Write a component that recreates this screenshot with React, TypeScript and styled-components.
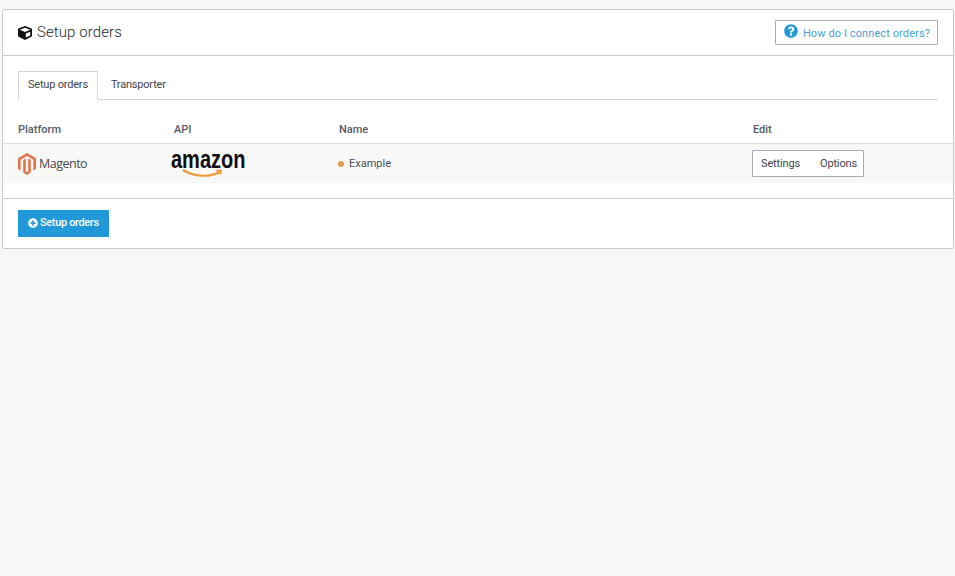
import * as React from "react";
import styled, { createGlobalStyle } from "styled-components";
import { FaCube, FaPlusCircle, FaQuestionCircle } from "react-icons/fa";

const GlobalStyle = createGlobalStyle`
  html, body {
    margin: 0;
    padding: 0;
    height: 100%;
    background: #f8f8f8;
    font-family: Roboto, "Liberation Sans", sans-serif;
    color: #3f444f;
  }
`;

const App: React.FC = () => {
  return (
    <Page>
      <GlobalStyle />
      <Card>
        <CardHeader>
          <CardTitle>
            <FaCube size={14} color="#111" />
            <span>Setup orders</span>
          </CardTitle>
          <HelpButton>
            <FaQuestionCircle size={14} color="#2199d8" />
            <span>How do I connect orders?</span>
          </HelpButton>
        </CardHeader>
        <CardBody>
          <Tabs>
            <Tab $active>Setup orders</Tab>
            <Tab>Transporter</Tab>
          </Tabs>
          <HeaderRow>
            <HeaderCell>Platform</HeaderCell>
            <HeaderCell>API</HeaderCell>
            <HeaderCell>Name</HeaderCell>
            <HeaderCell>Edit</HeaderCell>
          </HeaderRow>
          <DataRow>
            <MagentoLogo>
              <svg width="18" height="22" viewBox="0 0 18 22">
                <path
                  fill="#e2734a"
                  d="M9 0 L18 5.2 V16 L15.4 17.5 V6.7 L9 3 L2.6 6.7 V17.5 L0 16 V5.2 Z"
                />
                <path
                  fill="#e2734a"
                  d="M7.8 5.6 L7.8 18.4 L9 19.1 L10.2 18.4 V5.6 L12.8 7.1 V19.6 L9 22 L5.2 19.6 V7.1 Z"
                />
              </svg>
              <MagentoText>Magento</MagentoText>
            </MagentoLogo>
            <AmazonLogo>
              <AmazonText>amazon</AmazonText>
              <svg width="42" height="9" viewBox="0 0 42 9">
                <path
                  d="M1 1 C10 7 26 9 37 3.5"
                  fill="none"
                  stroke="#ee9b3a"
                  strokeWidth="2.2"
                />
                <path d="M33 1 L40 0.5 L39 6 Z" fill="#ee9b3a" />
              </svg>
            </AmazonLogo>
            <NameCell>
              <StatusDot />
              Example
            </NameCell>
            <EditGroup>
              <EditButton>Settings</EditButton>
              <EditButton>Options</EditButton>
            </EditGroup>
          </DataRow>
        </CardBody>
        <CardFooter>
          <PrimaryButton>
            <FaPlusCircle size={10} color="#fff" />
            <span>Setup orders</span>
          </PrimaryButton>
        </CardFooter>
      </Card>
    </Page>
  );
};

export default App;

const Page = styled.div`
  padding: 9px 1px 0 2px;
  min-height: 567px;
`;

const Card = styled.div`
  background: #fff;
  border: 1px solid #c9c9c9;
  border-radius: 2px;
`;

const CardHeader = styled.div`
  display: flex;
  justify-content: space-between;
  align-items: center;
  height: 45px;
  padding: 0 15px;
  border-bottom: 1px solid #c9c9c9;
`;

const CardTitle = styled.div`
  display: flex;
  align-items: center;
  gap: 5px;
  font-size: 15px;
  font-weight: 300;
  letter-spacing: 0.1px;
  color: #23262d;

  span {
    margin-top: -1px;
  }
`;

const HelpButton = styled.div`
  display: flex;
  align-items: center;
  gap: 5px;
  box-sizing: border-box;
  height: 25px;
  padding: 0 7px 0 8px;
  border: 1px solid #a9aabb;
  border-radius: 1px;
  font-size: 11px;
  letter-spacing: 0.1px;
  color: #4a9fd8;

  span {
    margin-top: 2px;
  }

  svg {
    margin-top: -3px;
  }
`;

const CardBody = styled.div`
  padding: 15px 15px 15px;
  border-bottom: 1px solid #c9c9c9;
`;

const Tabs = styled.div`
  display: flex;
  height: 29px;
  box-sizing: border-box;
  border-bottom: 1px solid #d4d4d4;
`;

const Tab = styled.div<{ $active?: boolean }>`
  display: flex;
  align-items: center;
  box-sizing: border-box;
  height: 29px;
  padding: 0 ${(p) => (p.$active ? "9px 3px 9px" : "12px 3px")};
  font-size: 11px;
  letter-spacing: -0.2px;
  color: #3f444f;
  background: ${(p) => (p.$active ? "#fff" : "transparent")};
  border: 1px solid ${(p) => (p.$active ? "#d4d4d4" : "transparent")};
  border-bottom: ${(p) => (p.$active ? "1px solid #fff" : "none")};
`;

const HeaderRow = styled.div`
  display: grid;
  grid-template-columns: 156px 165px 414px 1fr;
  align-items: center;
  height: 44px;
  margin: 0 -15px;
  padding: 16px 15px 0;
  box-sizing: border-box;
  border-bottom: 1px solid #dcdcdc;
`;

const HeaderCell = styled.div`
  font-size: 11px;
  font-weight: 500;
  color: #555a64;
`;

const DataRow = styled.div`
  display: grid;
  grid-template-columns: 153px 168px 414px 1fr;
  align-items: center;
  height: 39px;
  margin: 0 -15px;
  padding: 0 15px;
  background: #f8f8f6;
`;

const MagentoLogo = styled.div`
  display: flex;
  align-items: center;
  gap: 3px;
`;

const MagentoText = styled.span`
  font-family: "Open Sans", sans-serif;
  font-size: 12.5px;
  font-weight: 500;
  letter-spacing: -0.5px;
  color: #4a4650;
`;

const AmazonLogo = styled.div`
  display: flex;
  flex-direction: column;
  align-items: flex-start;
  height: 31px;

  svg {
    margin: -2px 0 0 11px;
  }
`;

const AmazonText = styled.span`
  display: block;
  width: 74px;
  font-family: "Liberation Sans", sans-serif;
  font-size: 25px;
  line-height: 23px;
  font-weight: 700;
  white-space: nowrap;
  color: #0f0f14;
  transform: scaleX(0.8);
  transform-origin: left center;
`;

const NameCell = styled.div`
  display: flex;
  align-items: center;
  gap: 5px;
  margin-left: -1px;
  font-size: 11px;
  color: #4b505a;
`;

const StatusDot = styled.span`
  width: 6px;
  height: 6px;
  border-radius: 50%;
  background: #e89a4e;
`;

const EditGroup = styled.div`
  display: flex;
  justify-self: start;
  align-items: center;
  gap: 20px;
  box-sizing: border-box;
  height: 27px;
  margin-left: -1px;
  padding: 0 6px 0 8px;
  background: #fff;
  border: 1px solid #a9aabb;
  border-radius: 1px;
`;

const EditButton = styled.span`
  font-size: 11px;
  letter-spacing: -0.15px;
  color: #3f444f;
`;

const CardFooter = styled.div`
  padding: 11px 15px;
`;

const PrimaryButton = styled.div`
  display: inline-flex;
  align-items: center;
  gap: 2px;
  box-sizing: border-box;
  width: 91px;
  height: 27px;
  padding: 0 0 2px 10px;
  background: #2199d8;
  border-radius: 1px;
  font-size: 11px;
  font-weight: 500;
  letter-spacing: -0.35px;
  color: #fff;
  vertical-align: top;
`;
